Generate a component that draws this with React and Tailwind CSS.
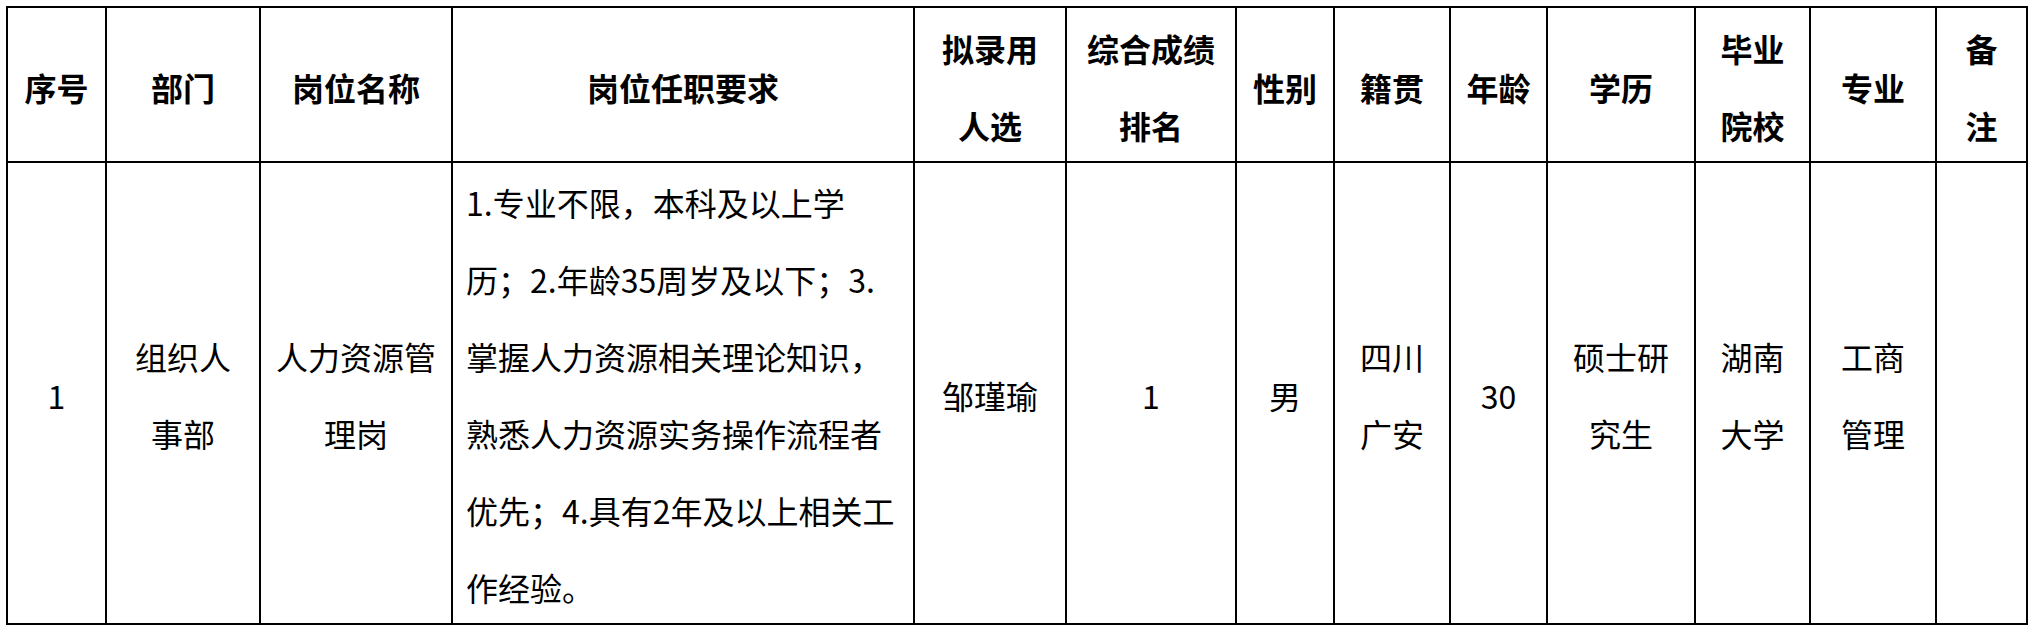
import React from "react";

const cols = [99, 154, 192, 462, 152, 170, 98, 116, 97, 148, 115, 126, 91];

const headers = [
  ["序号"],
  ["部门"],
  ["岗位名称"],
  ["岗位任职要求"],
  ["拟录用", "人选"],
  ["综合成绩", "排名"],
  ["性别"],
  ["籍贯"],
  ["年龄"],
  ["学历"],
  ["毕业", "院校"],
  ["专业"],
  ["备", "注"],
];

const body = [
  ["1"],
  ["组织人", "事部"],
  ["人力资源管", "理岗"],
  null,
  ["邹瑾瑜"],
  ["1"],
  ["男"],
  ["四川", "广安"],
  ["30"],
  ["硕士研", "究生"],
  ["湖南", "大学"],
  ["工商", "管理"],
  [],
];

const req = [
  "1.专业不限，本科及以上学",
  "历；2.年龄35周岁及以下；3.",
  "掌握人力资源相关理论知识，",
  "熟悉人力资源实务操作流程者",
  "优先；4.具有2年及以上相关工",
  "作经验。",
];

export default function App() {
  return (
    <div
      className="w-[2037px] h-[633px] bg-white pl-[6px] pt-[6px] text-black"
      style={{ fontFamily: '"Noto Sans CJK SC", "Microsoft YaHei", sans-serif' }}
    >
      <div
        className="grid w-[2022px] border-l-2 border-t-2 border-black grid-rows-[155px_462px]"
        style={{ gridTemplateColumns: cols.map((c) => c + "px").join(" ") }}
      >
        {headers.map((lines, i) => (
          <div
            key={"h" + i}
            className="border-r-2 border-b-2 border-black flex flex-col items-center justify-center pt-[5px] text-[32px] leading-[77px] font-bold whitespace-nowrap"
          >
            {lines.map((l, j) => (
              <div key={j}>{l}</div>
            ))}
          </div>
        ))}
        {body.map((lines, i) =>
          lines === null ? (
            <div
              key={"b" + i}
              className="border-r-2 border-b-2 border-black flex flex-col items-start justify-center pl-[13px] pt-[4px] text-[32px] leading-[77px] whitespace-nowrap"
            >
              {req.map((l, j) => (
                <div key={j}>{l}</div>
              ))}
            </div>
          ) : (
            <div
              key={"b" + i}
              className="border-r-2 border-b-2 border-black flex flex-col items-center justify-center pt-[4px] text-[32px] leading-[77px] whitespace-nowrap"
            >
              {lines.map((l, j) => (
                <div key={j}>{l}</div>
              ))}
            </div>
          )
        )}
      </div>
    </div>
  );
}
